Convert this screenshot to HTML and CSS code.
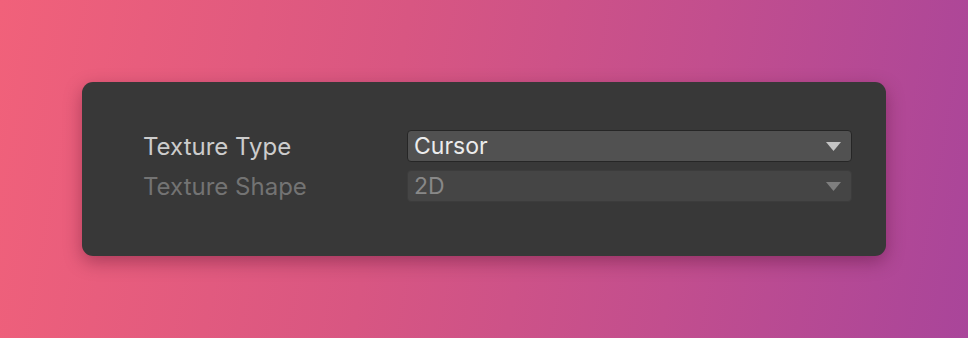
FILE: index.html
```html
<!DOCTYPE html>
<html>
<head>
<meta charset="utf-8">
<link rel="stylesheet" href="styles.css">
</head>
<body>
<div class="stage">
  <div class="panel">
    <div class="row">
      <div class="label">Texture Type</div>
      <div class="select">
        <span class="value">Cursor</span>
        <svg class="arrow" width="15" height="9" viewBox="0 0 15 9"><path d="M0 0H15L7.5 9Z" fill="#c4c4c4"/></svg>
      </div>
    </div>
    <div class="row disabled">
      <div class="label">Texture Shape</div>
      <div class="select">
        <span class="value">2D</span>
        <svg class="arrow" width="15" height="9" viewBox="0 0 15 9"><path d="M0 0H15L7.5 9Z" fill="#7e7e7e"/></svg>
      </div>
    </div>
  </div>
</div>
</body>
</html>
```

FILE: styles.css
```css
html, body {
  margin: 0;
  padding: 0;
}
body {
  width: 968px;
  height: 338px;
  overflow: hidden;
  font-family: Inter, "Noto Sans", sans-serif;
}
.stage {
  width: 968px;
  height: 338px;
  box-sizing: border-box;
  padding: 82px 82px 0 82px;
  background: linear-gradient(100deg, #f1617a 0%, #d85682 40%, #c24e8e 70%, #a9459a 100%);
}
.panel {
  width: 804px;
  height: 174px;
  box-sizing: border-box;
  background: #383838;
  border-radius: 11px;
  box-shadow: 0 6px 18px rgba(60, 0, 30, 0.35);
  padding: 48px 34px 0 61px;
  display: flex;
  flex-direction: column;
  gap: 8px;
}
.row {
  display: flex;
  align-items: center;
  height: 32px;
}
.label {
  width: 264px;
  flex: none;
  font-size: 24px;
  color: #cccccc;
}
.select {
  flex: 1;
  height: 32px;
  box-sizing: border-box;
  background: #515151;
  border: 1px solid #262626;
  border-radius: 4px;
  display: flex;
  align-items: center;
  justify-content: space-between;
  padding: 0 10px 0 6px;
}
.value {
  font-size: 23px;
  color: #ececec;
}
.arrow {
  display: block;
}
.disabled .label {
  color: #737373;
}
.disabled .select {
  background: #454545;
  border-color: #3c3c3c;
}
.disabled .value {
  color: #888888;
}
```
